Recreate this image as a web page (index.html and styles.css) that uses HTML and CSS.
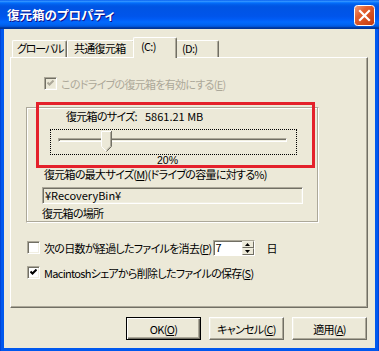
FILE: index.html
```html
<!DOCTYPE html>
<html lang="ja">
<head>
<meta charset="utf-8">
<title>復元箱のプロパティ</title>
<link rel="stylesheet" href="styles.css">
</head>
<body>
<div class="window">
  <div class="titlebar">
    <span class="title">復元箱のプロパティ</span>
    <span class="close">
      <svg width="21" height="21" viewBox="0 0 21 21">
        <defs>
          <linearGradient id="cg" x1="0" y1="0" x2="1" y2="1">
            <stop offset="0" stop-color="#F0A080"/>
            <stop offset="0.35" stop-color="#E4602F"/>
            <stop offset="1" stop-color="#C2380E"/>
          </linearGradient>
        </defs>
        <rect x="0.5" y="0.5" width="20" height="20" rx="3" fill="url(#cg)" stroke="#fff"/>
        <path d="M6 6 L15 15 M15 6 L6 15" stroke="#fff" stroke-width="2.2" stroke-linecap="square"/>
      </svg>
    </span>
  </div>
  <div class="frame">
    <div class="client">
      <div class="tabs">
        <div class="tab t1">グローバル</div>
        <div class="tab t2">共通復元箱</div>
        <div class="tab t3 sel">(C:)</div>
        <div class="tab t4">(D:)</div>
      </div>
      <div class="panel">
        <div class="check row1 disabled">
          <span class="box dis">
            <svg width="7" height="7" viewBox="0 0 7 7"><path d="M0.5 2.5 L2.5 4.5 L6.5 0.5" stroke="#ACA899" stroke-width="2" fill="none"/></svg>
          </span>
          <span>このドライブの復元箱を有効にする(<u>E</u>)</span>
        </div>
        <div class="group">
          <div class="mark"></div>
          <div class="size-line"><span class="size-label">復元箱のサイズ:</span><span class="size-val">5861.21 MB</span></div>
          <div class="slider">
            <div class="track"></div>
            <div class="thumb">
              <svg width="11" height="21" viewBox="0 0 11 21">
                <path d="M0.5 0.5 H10.5 V15.5 L5.5 20.5 L0.5 15.5 Z" fill="#ECE9D8"/>
                <path d="M0.5 15.5 V0.5 H10" stroke="#fff" fill="none"/>
                <path d="M0.5 15.5 L5 20" stroke="#fff" fill="none"/>
                <path d="M10.5 0 V15.5 L5.5 20.5" stroke="#716F64" fill="none"/>
                <path d="M9.5 1 V15.2 L5.5 19.2" stroke="#ACA899" fill="none"/>
              </svg>
            </div>
          </div>
          <div class="pct">20%</div>
          <div class="maxlabel">復元箱の最大サイズ(<u>M</u>)(ドライブの容量に対する%)</div>
          <div class="path">¥RecoveryBin¥</div>
          <div class="loclabel">復元箱の場所</div>
        </div>
        <div class="check row2">
          <span class="box"></span>
          <span>次の日数が経過したファイルを消去(<u>P</u>)</span>
          <span class="spin">
            <span class="spin-edit">7</span>
            <span class="spin-btns">
              <span class="sb"><svg width="5" height="3" viewBox="0 0 5 3"><path d="M2.5 0 L5 3 H0 Z" fill="#000"/></svg></span>
              <span class="sb"><svg width="5" height="3" viewBox="0 0 5 3"><path d="M0 0 H5 L2.5 3 Z" fill="#000"/></svg></span>
            </span>
          </span>
          <span class="day">日</span>
        </div>
        <div class="check row3">
          <span class="box">
            <svg width="7" height="7" viewBox="0 0 7 7"><path d="M0.5 2.5 L2.5 4.5 L6.5 0.5" stroke="#000" stroke-width="2" fill="none"/></svg>
          </span>
          <span>Macintoshシェアから削除したファイルの保存(<u>S</u>)</span>
        </div>
      </div>
      <div class="buttons">
        <div class="btn default">OK(<u>O</u>)</div>
        <div class="btn">キャンセル(<u>C</u>)</div>
        <div class="btn">適用(<u>A</u>)</div>
      </div>
    </div>
  </div>
</div>
</body>
</html>
```
FILE: styles.css
```css
* { box-sizing: border-box; }

body {
  margin: 0;
  width: 379px;
  height: 351px;
  overflow: hidden;
  font-family: "Noto Sans CJK JP", "Noto Sans", sans-serif;
  font-size: 11px;
  letter-spacing: -0.7px;
  font-feature-settings: "palt";
  color: #000;
  background: #0054E3;
}

u { text-decoration: underline; text-underline-offset: 1px; }

.window {
  width: 379px;
  height: 351px;
  display: flex;
  flex-direction: column;
}

.titlebar {
  height: 29px;
  flex: none;
  display: flex;
  align-items: center;
  justify-content: space-between;
  padding: 0 4px 0 7px;
  background: linear-gradient(#0058ee 0%, #3593ff 4%, #288eff 6%, #127dff 8%, #036ffc 10%, #0262ee 14%, #0057e5 20%, #0054e3 24%, #0055eb 56%, #005bf5 66%, #026afe 76%, #0062ef 86%, #0052d6 92%, #0040ab 94%, #003092 100%);
}

.title {
  color: #fff;
  font-weight: bold;
  font-size: 12.5px;
  letter-spacing: 0;
  text-shadow: 1px 1px #0f1089;
}

.close { display: flex; margin-top: 1px; }

.frame {
  flex: 1;
  padding: 0 4px 3px 4px;
  background: linear-gradient(to right, #0030C0 0, #0058EE 1px, #0058EE calc(100% - 1px), #0030C0 100%);
  display: flex;
}

.client {
  flex: 1;
  background: #ECE9D8;
  padding: 8px 7px 0 6px;
  display: flex;
  flex-direction: column;
}

.tabs {
  height: 20px;
  display: flex;
  align-items: flex-end;
  padding-left: 2px;
}

.tab {
  height: 17px;
  padding-left: 6px;
  line-height: 15px;
  background: #ECE9D8;
  border-top: 1px solid #fff;
  border-left: 1px solid #fff;
  border-right: 1px solid #716F64;
  box-shadow: inset -1px 0 #ACA899;
  border-radius: 2px 2px 0 0;
  white-space: nowrap;
  overflow: hidden;
}

.t1 { width: 55px; padding-left: 4px; letter-spacing: -1.2px; }
.t2 { width: 68px; }
.t3 { width: 44px; }
.t4 { width: 44px; }

.tab.sel {
  height: 21px;
  margin: 0 -2px -1px -2px;
  padding-left: 7px;
  line-height: 16px;
  position: relative;
  z-index: 1;
}

.panel {
  height: 251px;
  border: 1px solid;
  border-color: #fff #716F64 #716F64 #fff;
  box-shadow: inset -1px -1px #ACA899;
  padding: 19px 0 0 15px;
  display: flex;
  flex-direction: column;
  align-items: flex-start;
}

.check {
  display: flex;
  align-items: center;
  height: 13px;
  white-space: nowrap;
}

.check .box { margin-right: 4px; }

.disabled { color: #ACA899; }

.row1 { margin-left: 18px; }

.box {
  width: 13px;
  height: 13px;
  flex: none;
  border: 1px solid;
  border-color: #ACA899 #fff #fff #ACA899;
  box-shadow: inset 1px 1px #716F64, inset -1px -1px #F1EFE2;
  background: #fff;
  display: flex;
  align-items: center;
  justify-content: center;
}

.box.dis { background: #ECE9D8; }

.group {
  position: relative;
  margin-top: 17px;
  width: 293px;
  height: 116px;
  border: 1px solid;
  border-color: #ACA899 #fff #fff #ACA899;
  box-shadow: inset -1px -1px #ACA899, inset 1px 1px #fff;
  padding: 1px 0 0 15px;
}

.mark {
  position: absolute;
  left: 9px;
  top: -6px;
  width: 279px;
  height: 66px;
  border: 3px solid #E4212B;
}

.size-line {
  height: 14px;
  line-height: 14px;
  padding-left: 24px;
  white-space: nowrap;
  display: flex;
}

.size-label { width: 79px; flex: none; }
.size-val { letter-spacing: 0; }

.slider {
  position: relative;
  margin: 6px 0 0 8px;
  width: 247px;
  height: 26px;
  border: 1px dotted #000;
  padding: 8px 0 0 7px;
}

.track {
  width: 229px;
  height: 4px;
  border: 1px solid;
  border-color: #ACA899 #fff #fff #ACA899;
  box-shadow: inset 1px 1px #716F64, inset -1px -1px #F1EFE2;
}

.thumb {
  position: absolute;
  left: 50px;
  top: 1px;
  display: flex;
}

.pct {
  height: 10px;
  line-height: 10px;
  padding-left: 115px;
  letter-spacing: 0;
  font-size: 10.5px;
  font-family: "Liberation Sans", sans-serif;
}

.maxlabel {
  margin-top: 3px;
  height: 12px;
  line-height: 12px;
  padding-left: 2px;
  white-space: nowrap;
}

.path {
  margin-top: 7px;
  width: 261px;
  height: 17px;
  line-height: 14px;
  padding-left: 2px;
  border: 1px solid;
  border-color: #ACA899 #fff #fff #ACA899;
  box-shadow: inset 1px 1px #716F64, inset -1px -1px #F1EFE2;
  background: #ECE9D8;
  letter-spacing: 0;
}

.loclabel {
  margin-top: 3px;
  height: 12px;
  line-height: 12px;
}

.row2 { margin-top: 18px; margin-left: 1px; }
.row3 { margin-top: 12px; margin-left: 1px; }

.spin {
  display: flex;
  height: 16px;
  margin-left: 1px;
  border: 1px solid;
  border-color: #ACA899 #fff #fff #ACA899;
}

.spin-edit {
  width: 28px;
  background: #fff;
  padding-left: 2px;
  line-height: 13px;
  box-shadow: inset 1px 1px #716F64;
}

.spin-btns {
  width: 12px;
  display: flex;
  flex-direction: column;
}

.sb {
  flex: 1;
  display: flex;
  align-items: center;
  justify-content: center;
  background: #ECE9D8;
  border: 1px solid;
  border-color: #F1EFE2 #716F64 #716F64 #F1EFE2;
}

.day { margin-left: 12px; }

.buttons {
  margin-top: 9px;
  display: flex;
  justify-content: flex-end;
  gap: 8px;
  padding-right: 1px;
}

.btn {
  width: 75px;
  height: 23px;
  display: flex;
  align-items: center;
  justify-content: center;
  border: 1px solid;
  border-color: #fff #716F64 #716F64 #fff;
  box-shadow: inset -1px -1px #ACA899, inset 1px 1px #F1EFE2;
  background: #ECE9D8;
  white-space: nowrap;
}

.btn.default {
  border-color: #000;
  box-shadow: inset 1px 1px #fff, inset -1px -1px #716F64, inset -2px -2px #ACA899;
}
```
